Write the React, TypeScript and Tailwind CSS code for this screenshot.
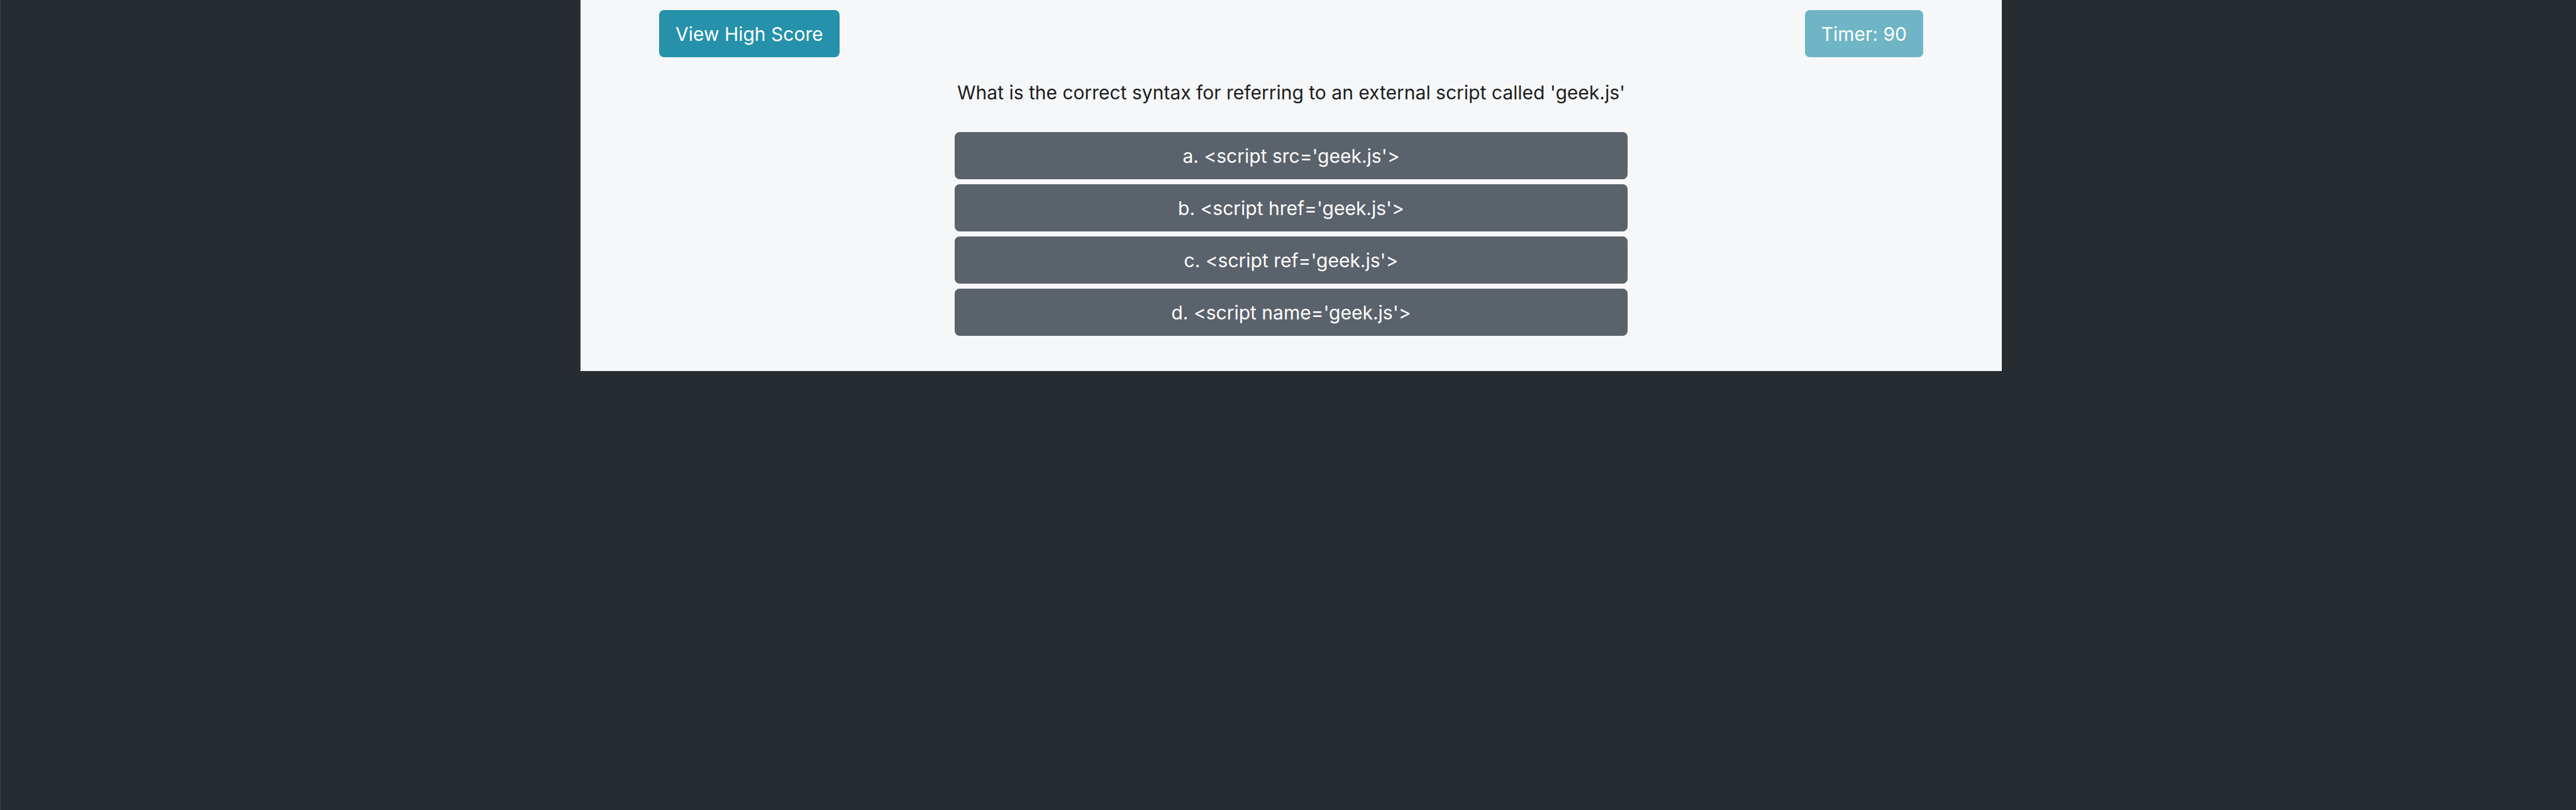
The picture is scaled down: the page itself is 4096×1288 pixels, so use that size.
const answers = [
  "a. <script src='geek.js'>",
  "b. <script href='geek.js'>",
  "c. <script ref='geek.js'>",
  "d. <script name='geek.js'>",
];

export default function App() {
  return (
    <div className="min-h-screen border-l border-[#3a4246] bg-[#272c30] pl-[9px] font-['Inter',sans-serif] text-[30px] leading-[47px] text-[#1b1d20]">
      <main className="mx-auto w-full max-w-[2260px] bg-[#f6f7f9] px-[125px] pt-4 pb-14">
        <header className="flex items-center justify-between">
          <button
            type="button"
            className="rounded-lg bg-[#2591aa] px-[26px] pt-[15px] pb-[13px] text-white"
          >
            View High Score
          </button>
          <button
            type="button"
            disabled
            className="rounded-lg bg-[#6fb5c5] px-[26px] pt-[15px] pb-[13px] text-white"
          >
            Timer: 90
          </button>
        </header>
        <section className="mx-auto w-full max-w-[1070px]">
          <h1 className="pt-[33px] pb-[39px] text-center whitespace-nowrap">
            What is the correct syntax for referring to an external script called 'geek.js'
          </h1>
          <div className="flex flex-col gap-2">
            {answers.map((answer) => (
              <button
                key={answer}
                type="button"
                className="w-full rounded-lg bg-[#5a626b] pt-[15px] pb-[13px] text-white"
              >
                {answer}
              </button>
            ))}
          </div>
        </section>
      </main>
    </div>
  );
}
